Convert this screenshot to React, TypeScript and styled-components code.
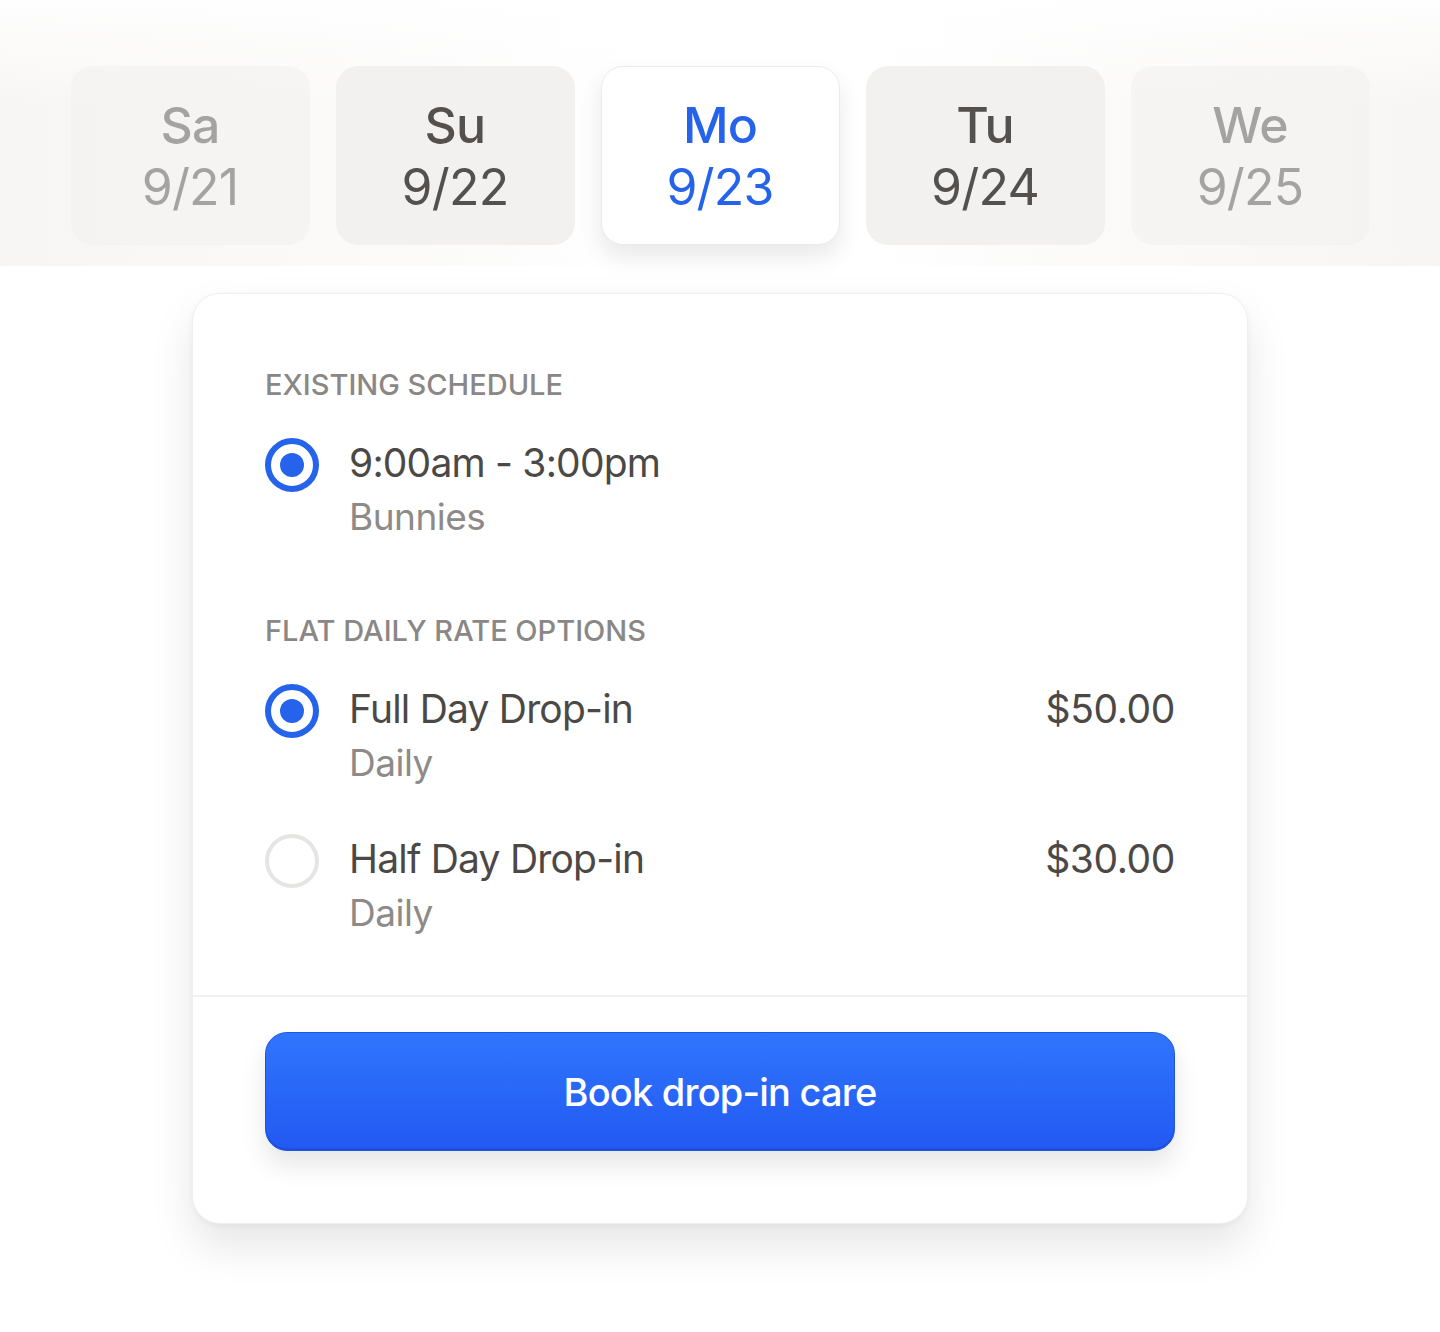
import { createGlobalStyle } from 'styled-components';
import styled from 'styled-components';

const GlobalStyle = createGlobalStyle`
  html, body {
    margin: 0;
    padding: 0;
    background: #ffffff;
  }
  body {
    min-height: 1332px;
    font-family: Inter, "Noto Sans", "Liberation Sans", sans-serif;
    -webkit-font-smoothing: antialiased;
  }
`;

const BLUE = '#2563eb';

/* ---------- date strip ---------- */
const DayBand = styled.div`
  height: 266px;
  box-sizing: border-box;
  padding-top: 66px;
  display: flex;
  justify-content: center;
  gap: 26px;
  background:
    linear-gradient(180deg, rgba(255, 255, 255, 0.9) 0%, rgba(255, 255, 255, 0) 40%),
    linear-gradient(90deg, #f8f6f4 0%, #fbfaf9 25%, #ffffff 45%, #ffffff 60%, #fbfaf9 78%, #f8f6f4 100%);
`;

const DayCard = styled.div<{ $active?: boolean; $faded?: boolean }>`
  width: 239px;
  height: 179px;
  box-sizing: border-box;
  border-radius: 22px;
  display: flex;
  flex-direction: column;
  align-items: center;
  justify-content: center;
  background: ${p => (p.$active ? '#ffffff' : '#f2f1ef')};
  border: 1px solid ${p => (p.$active ? '#ebebea' : 'transparent')};
  box-shadow: ${p => (p.$active ? '0 12px 24px rgba(0, 0, 0, 0.09)' : 'none')};
  color: ${p => (p.$active ? BLUE : '#53504d')};
  opacity: ${p => (p.$faded ? 0.5 : 1)};
`;

const DayName = styled.div`
  font-size: 50px;
  line-height: 62px;
  font-weight: 500;
  letter-spacing: -0.8px;
`;

const DayDate = styled.div`
  font-size: 50px;
  line-height: 62px;
  font-weight: 400;
  letter-spacing: -0.8px;
`;

/* ---------- booking card ---------- */
const Card = styled.div`
  width: 1056px;
  margin: 27px auto 0;
  box-sizing: border-box;
  border: 1px solid #efefee;
  border-radius: 28px;
  background: #ffffff;
  box-shadow: 0 22px 44px rgba(0, 0, 0, 0.1), 0 2px 6px rgba(0, 0, 0, 0.04);
`;

const CardBody = styled.div`
  padding: 73px 72px 55px;
  display: flex;
  flex-direction: column;
  gap: 69px;
`;

const Section = styled.div`
  display: flex;
  flex-direction: column;
`;

const SectionTitle = styled.div`
  font-size: 29px;
  line-height: 36px;
  font-weight: 500;
  color: #8a8785;
  letter-spacing: 0;
  text-transform: uppercase;
  margin-bottom: 33px;
`;

const OptionList = styled.div`
  display: flex;
  flex-direction: column;
  gap: 42px;
`;

const Option = styled.div`
  display: flex;
  align-items: flex-start;
  gap: 30px;
`;

const Radio = styled.span<{ $checked?: boolean }>`
  flex: none;
  width: 54px;
  height: 54px;
  margin-top: 2px;
  box-sizing: border-box;
  border-radius: 50%;
  border: ${p => (p.$checked ? `6px solid ${BLUE}` : '4px solid #e6e5e4')};
  display: flex;
  align-items: center;
  justify-content: center;
  &::after {
    content: '';
    width: 24px;
    height: 24px;
    border-radius: 50%;
    background: ${BLUE};
    display: ${p => (p.$checked ? 'block' : 'none')};
  }
`;

const OptionText = styled.div`
  flex: 1;
  display: flex;
  flex-direction: column;
`;

const OptionTitle = styled.div`
  font-size: 39px;
  line-height: 54px;
  color: #4b4846;
  letter-spacing: -0.8px;
`;

const OptionSub = styled.div`
  font-size: 37px;
  line-height: 54px;
  color: #8d8a88;
  letter-spacing: -0.5px;
`;

const Price = styled.div`
  font-size: 39px;
  line-height: 54px;
  color: #4b4846;
  letter-spacing: -0.4px;
`;

const CardFooter = styled.div`
  border-top: 2px solid #f1f1f0;
  padding: 35px 72px 72px;
`;

const BookButton = styled.button`
  width: 100%;
  height: 119px;
  border: 1px solid #1f55dd;
  border-radius: 22px;
  background: linear-gradient(180deg, #3075fd 0%, #2259f2 100%);
  box-shadow: 0 14px 26px rgba(0, 0, 0, 0.1), inset 0 -2px 0 rgba(20, 60, 190, 0.35);
  color: #ffffff;
  font-family: inherit;
  font-size: 38px;
  font-weight: 500;
  letter-spacing: -0.8px;
  cursor: pointer;
`;

const days = [
  { name: 'Sa', date: '9/21', faded: true },
  { name: 'Su', date: '9/22' },
  { name: 'Mo', date: '9/23', active: true },
  { name: 'Tu', date: '9/24' },
  { name: 'We', date: '9/25', faded: true },
];

const rates = [
  { id: 'full', title: 'Full Day Drop-in', sub: 'Daily', price: '$50.00', checked: true },
  { id: 'half', title: 'Half Day Drop-in', sub: 'Daily', price: '$30.00', checked: false },
];

export default function App() {
  return (
    <>
      <GlobalStyle />
      <DayBand>
        {days.map(d => (
          <DayCard key={d.name} $active={d.active} $faded={d.faded}>
            <DayName>{d.name}</DayName>
            <DayDate>{d.date}</DayDate>
          </DayCard>
        ))}
      </DayBand>

      <Card>
        <CardBody>
          <Section>
            <SectionTitle>Existing schedule</SectionTitle>
            <Option>
              <Radio $checked />
              <OptionText>
                <OptionTitle>9:00am - 3:00pm</OptionTitle>
                <OptionSub>Bunnies</OptionSub>
              </OptionText>
            </Option>
          </Section>

          <Section>
            <SectionTitle>Flat daily rate options</SectionTitle>
            <OptionList>
              {rates.map(r => (
                <Option key={r.id}>
                  <Radio $checked={r.checked} />
                  <OptionText>
                    <OptionTitle>{r.title}</OptionTitle>
                    <OptionSub>{r.sub}</OptionSub>
                  </OptionText>
                  <Price>{r.price}</Price>
                </Option>
              ))}
            </OptionList>
          </Section>
        </CardBody>

        <CardFooter>
          <BookButton>Book drop-in care</BookButton>
        </CardFooter>
      </Card>
    </>
  );
}
